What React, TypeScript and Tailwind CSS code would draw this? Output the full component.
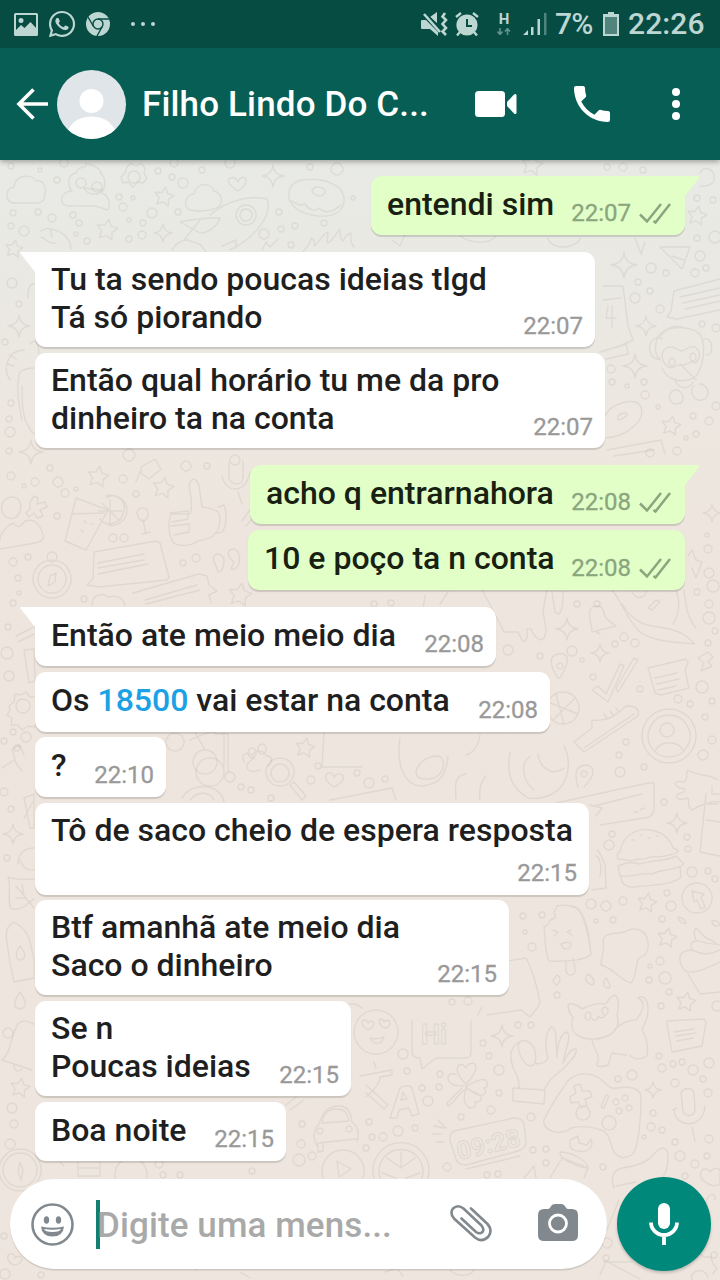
import {FaWhatsapp} from 'react-icons/fa';

type Message = {
    out?: boolean,
    tail?: boolean,
    text: string[],
    time: string,
    box: string,
}

// box holds the bubble size and the gap above it
const messages: Message[] = [
    {out: true, tail: true, text: ['entendi sim'], time: '22:07', box: 'w-[314px] h-[59px] mt-[16px]'},
    {tail: true, text: ['Tu ta sendo poucas ideias tlgd', 'Tá só piorando'], time: '22:07', box: 'w-[560px] h-[95px] mt-[17px]'},
    {text: ['Então qual horário tu me da pro', 'dinheiro ta na conta'], time: '22:07', box: 'w-[570px] h-[95px] mt-[6px]'},
    {out: true, tail: true, text: ['acho q entrarnahora'], time: '22:08', box: 'w-[435px] h-[59px] mt-[17px]'},
    {out: true, text: ['10 e poço ta n conta'], time: '22:08', box: 'w-[437px] h-[60px] mt-[6px]'},
    {tail: true, text: ['Então ate meio meio dia'], time: '22:08', box: 'w-[461px] h-[59px] mt-[17px]'},
    {text: ['Os 18500 vai estar na conta'], time: '22:08', box: 'w-[515px] h-[60px] mt-[6px]'},
    {text: ['?'], time: '22:10', box: 'w-[131px] h-[60px] mt-[5px]'},
    {text: ['Tô de saco cheio de espera resposta'], time: '22:15', box: 'w-[554px] h-[92px] mt-[6px]'},
    {text: ['Btf amanhã ate meio dia', 'Saco o dinheiro'], time: '22:15', box: 'w-[474px] h-[95px] mt-[5px]'},
    {text: ['Se n', 'Poucas ideias'], time: '22:15', box: 'w-[316px] h-[95px] mt-[6px]'},
    {text: ['Boa noite'], time: '22:15', box: 'w-[251px] h-[59px] mt-[6px]'},
];

// wallpaper: x, y, radius
const dots = [
    [11, 166, 3], [40, 170, 2], [64, 163, 4], [158, 171, 3], [174, 163, 4], [172, 177, 3], [183, 183, 5], [202, 170, 3], [230, 163, 5],
    [57, 180, 3], [119, 197, 3], [123, 207, 4], [133, 198, 2], [152, 213, 5], [178, 212, 3], [129, 220, 2], [143, 223, 3], [52, 218, 4],
    [73, 215, 3], [79, 223, 3], [76, 234, 2], [87, 241, 3], [11, 226, 3], [24, 231, 5], [38, 212, 3], [13, 213, 3], [129, 239, 3], [142, 235, 4],
    [264, 234, 5], [281, 229, 3], [279, 212, 3], [295, 226, 3], [291, 245, 3], [324, 223, 3], [310, 167, 3], [337, 169, 6], [353, 198, 2],
    [12, 283, 5], [19, 304, 3], [5, 342, 3], [11, 403, 3], [9, 419, 3], [10, 432, 5], [9, 451, 3], [129, 455, 6],
    [607, 167, 3], [623, 167, 4], [643, 170, 3], [697, 198, 3], [713, 200, 3], [697, 238, 3], [715, 237, 6], [700, 256, 5], [651, 268, 5],
    [666, 273, 3], [695, 273, 4], [706, 268, 3], [638, 282, 3], [650, 291, 3], [635, 298, 5], [660, 309, 4], [702, 324, 3], [716, 328, 4],
    [611, 369, 4], [612, 382, 3], [627, 386, 2], [644, 382, 3], [645, 395, 4], [716, 406, 4], [658, 407, 2], [693, 416, 3], [709, 421, 4],
    [686, 438, 2], [677, 451, 4], [696, 434, 3], [650, 453, 4], [235, 460, 5], [11, 476, 4], [35, 482, 4], [24, 486, 2], [50, 468, 3], [58, 482, 5],
    [65, 493, 4], [76, 489, 2], [123, 479, 4], [136, 494, 3], [57, 516, 3], [186, 466, 5], [207, 466, 3], [113, 538, 4], [124, 538, 4],
    [13, 562, 4], [28, 557, 3], [18, 578, 3], [19, 593, 2], [13, 603, 3], [84, 599, 3], [183, 563, 3], [196, 558, 4], [8, 627, 3],
    [7, 653, 6], [9, 676, 5], [13, 732, 3], [26, 737, 5], [4, 741, 3], [17, 748, 3], [708, 549, 4], [707, 535, 2], [709, 573, 5],
    [713, 586, 6], [709, 604, 4], [709, 618, 6], [697, 592, 3], [577, 604, 3], [597, 604, 3], [624, 637, 4], [635, 643, 4], [615, 644, 3],
    [572, 651, 5], [582, 660, 2], [540, 656, 3], [508, 650, 5], [593, 677, 3], [640, 689, 3], [708, 643, 3], [715, 631, 3], [702, 687, 6],
    [712, 701, 3], [690, 704, 3], [678, 699, 4], [626, 742, 3], [712, 740, 4], [619, 755, 3], [703, 755, 5], [705, 717, 3], [374, 604, 3], [391, 603, 3],
    [4, 792, 4], [11, 809, 3], [7, 858, 3], [230, 777, 5], [241, 787, 3], [251, 790, 3], [311, 780, 4], [318, 766, 3], [271, 798, 3],
    [357, 773, 3], [369, 783, 5], [385, 779, 3], [620, 772, 5], [644, 767, 3], [664, 802, 3], [612, 834, 3], [609, 845, 5], [687, 837, 3],
    [688, 849, 3], [692, 872, 5], [708, 871, 3], [715, 879, 3], [591, 904, 5], [606, 906, 5], [623, 901, 4], [613, 920, 3], [596, 921, 2],
    [667, 893, 3], [671, 906, 5], [662, 919, 3], [542, 915, 3], [523, 916, 3], [525, 932, 2], [532, 947, 4], [557, 995, 3], [660, 961, 4],
    [650, 966, 2], [649, 980, 3], [665, 978, 6], [669, 992, 3], [661, 1006, 3], [717, 1006, 5], [468, 1001, 4], [452, 1002, 3],
    [8, 1033, 5], [12, 1108, 5], [14, 1124, 4], [302, 1124, 3], [301, 1144, 4], [299, 1160, 6], [312, 1156, 4], [159, 1164, 4], [163, 1175, 3],
    [180, 1175, 3], [252, 1171, 3], [4, 1236, 3], [5, 1274, 5], [41, 1275, 3], [403, 1054, 5], [407, 1071, 3], [422, 1088, 3], [428, 1101, 5],
    [440, 1074, 3], [439, 1087, 3], [483, 1043, 3], [489, 1056, 3], [499, 1070, 5], [499, 1093, 3], [518, 1025, 3], [531, 1025, 3],
    [491, 1110, 4], [461, 1117, 3], [531, 1117, 4], [398, 1131, 5], [415, 1128, 3], [383, 1137, 4], [372, 1137, 3], [369, 1122, 3],
    [366, 1148, 3], [447, 1167, 4], [487, 1175, 3], [498, 1174, 3], [533, 1150, 3], [546, 1149, 3], [546, 1163, 3], [603, 1167, 3],
    [618, 1079, 3], [632, 1075, 5], [659, 1056, 3], [662, 1068, 4], [673, 1064, 3], [682, 1062, 3], [693, 1070, 5], [709, 1063, 5],
    [703, 1079, 3], [675, 1083, 4], [708, 1093, 4], [653, 1113, 3], [651, 1127, 4], [644, 1137, 2], [662, 1130, 3], [675, 1142, 3],
    [709, 1139, 4], [680, 1156, 5], [695, 1164, 4], [707, 1156, 3], [685, 1176, 3], [607, 1243, 5], [714, 1255, 3], [606, 1258, 3],
];

const sparkles = [
    [273, 176, 11], [163, 233, 9], [19, 326, 11], [31, 452, 12], [624, 265, 13], [646, 326, 10], [635, 366, 12], [567, 629, 11],
    [600, 653, 9], [712, 513, 9], [13, 834, 10], [677, 823, 10], [502, 1036, 11], [653, 1090, 8],
];

const stars = [
    [164, 197, 10], [107, 230, 11], [14, 249, 9], [98, 477, 11], [163, 488, 11], [697, 216, 10], [671, 426, 10], [240, 595, 12],
    [20, 1088, 10], [305, 748, 10], [647, 903, 10], [667, 938, 10], [686, 1002, 10], [532, 165, 11],
];

const doodles = [
    // clouds
    'M12 203c-8-4-6-15 2-16 1-12 17-14 22-6 8-2 12 10 8 14 2 6-4 8-8 8z',
    'M190 210c-8-4-4-16 4-16 2-12 18-12 20-3 8 2 10 12 4 16-6 4-20 5-28 3z',
    'M92 605c0-12 12-12 16-8 6-2 16 0 17 9',
    'M342 1010c4-10 16-6 20-2', 'M700 173c4-8 14-4 14 4 2 6-6 10-14 9',
    // poop
    'M76 173c2-8 12-4 10-10 6 2 14 4 16 12M76 173c-10 2-8 14-4 18-12 0-14 14-4 15 14 0 28-2 38 4 6 0 4-14-4-17 4-8 4-16-2-20M84 188c4 8 16 8 18 2z',
    // gears
    'M127 167l4-4 5 3 5-3 4 5-1 5 3 5-4 5-5-1-5 5-5-5-5 1-2-6 4-4z',
    'M9 706l5-4 1-8 6 1 5-3 4 5 7 0 0 6 5 3-3 6 3 6-6 3-1 6-7-1-6 4-4-5-7 0 1-7-5-3 3-5z',
    'M334 1258l8 4M683 1262l4-5 7 1 4-5 6 4 7 0 2 7 4 4-4 6M692 1280c-4-10 14-14 16-2',
    // hearts
    'M238 191c-10-6-12-11-7-13 4-2 6 2 7 4 2-5 6-6 8-3 1 5-5 10-8 12z',
    'M334 787c-8-5-10-10-7-13 4-3 6 0 7 3 3-4 7-4 9-1 2 4-4 9-9 11z',
    'M13 1265c-6-4-7-9-3-11 4-1 5 2 5 4 3-3 6-2 7 1 0 4-5 6-9 6z',
    'M701 1178c-3-12 8-10 9-6 4-6 12-4 10 2v10c-6 4-14 0-19-6z',
    // donuts
    'M289 192c2-12 16-14 32-12 18 4 24 12 23 22-2 14-18 16-32 13-16-3-25-12-23-23zM312 190c4-6 14-2 13 3-3 5-12 3-13-3zM291 201c6 2 8 6 14 3 4 6 10 8 14 4 6 6 14 4 22-3',
    'M604 418c4-12 20-18 32-16 8 4 8 16-2 24-8 8-20 12-29 12M618 416c4-4 12-4 8 0s-10 6-8 0',
    // rocket
    'M180 222c12-3 28-4 40-4-2 8-14 16-20 15zM210 215c18-16 44-20 57-16 6 14-10 38-37 51M246 205a10 10 0 1 0 .1 0M246 209a6 6 0 1 0 .1 0M172 250c6-10 16-12 20-8 8 0 12 6 14 10M184 240l16-20M222 246l14-6v8',
    // fire
    'M303 252c4-6 8-8 8-14 4 2 4 6 3 8 6-4 8-12 14-14 0 6-2 8 0 11 6-4 8-10 12-14 0 6 0 10 3 12 2-4 3-6 8-8 0 4-2 8 3 14M262 250l4-8 4 5 8-8',
    // carrot
    'M41 231c6-2 4-4 10-2 8 1 20 8 20 20M41 237c6 2 8 8 14 6M50 229l2 8',
    // calendar and mail
    'M603 286l20 0 5 40 5 14-18 8M603 300l18-2M608 306l-2 12 10 0M612 306v22M600 352l26-8 2 10-22 5',
    'M660 247l30 0-8 22zM672 256l12 4',
    'M392 240l8 6 6-14M460 236c8 6 28 10 36 0M548 238c4 14 30 10 32 0M635 238l6 16 4-12',
    // speech bubbles
    'M720 279l-46 12-3 20-4 6 10 2 43-9M680 297l40-9M683 303l37-8M685 309l35-8',
    'M94 552l62-11 4 2 9 34-2 3-68 7-12-2 6-6zM98 563l46-9M98 568l46-8M98 574l50-10',
    'M133 593l66-19 8 2 2 9 8 6-8 4 2 8M145 600l52-15M146 604l54-14',
    'M648 668l38-9 2 4-3 7 4 18-28 7-6-2zM655 678l22-5M657 684l22-5M658 690l18-4',
    'M607 450l54-10 4 14M614 456l40-6', 'M24 650l10-1 1 32-6 2z',
    'M667 1021l37-2 2 3-4 24-30 6-5-28zM674 1032l20-3M676 1036l20-3M677 1041l16-3',
    'M412 1020v30c0 6 2 8 8 8l2 11 14-11h28c6 0 7-2 7-7v-30',
    'M478 1015l4-8M482 965l44-7c6 10 12 32 14 44l-2 5-8 10-9-7-34 5',
    // monkey
    'M660 337c6-10 16-12 22-10M660 360c-8-8-4-22 0-26 10-10 38-8 42 4 3 10 2 28-6 38-10 8-28 6-34-8M662 339c-8-4-14 4-12 12 2 8 8 9 10 7M704 339c10-2 10 18 2 16M663 361c-4-14 8-16 14-12 8 6 8-4 18-2 6 4 6 12 0 16-6-4-8 4-14 2-8 0-10 8-18-4M672 358a3 4 0 1 0 .1 0M693 353a3 4 0 1 0 .1 0M680 364l16 16M675 380c4 10 14 10 18 2M678 390c-10-2-12 14-2 14 8 0 10-8 2-14M700 384c8 0 12 14 2 16-8 2-14-10-8-14',
    // backpack
    'M24 350c-16 0-22 18-14 30M10 355l6 4M8 364l6 2M30 344c8-10 10 10 8 10M22 420c-4-18-6-36-2-48 6-4 10-4 14-4M22 386c0 20 0 36 12 48M34 284c-6 0-6 8-6 14',
    // user, drink
    'M12 497c8 0 10 8 8 14-4 12-16 8-18 0s2-13 10-14zM0 549l35-6c10-2 10-6 6-14-4-8-10-10-16-8-6 8-8 6-12 2C6 526 0 534 0 540',
    'M30 502l4-6 4 2-1 6 8-2 2 5-7 3 3 6-6 2-3-5-5 4-3-4 4-4z',
    'M76 498l32 12-22 40-21-9zM72 514l32-1M106 498c10-6 20 2 18 13-3 14-18 16-24 8M106 496a16 15 0 1 1 2 29M110 500v26M98 511l24 0M102 503l16 16M84 521l2 2M91 524l2 0M81 530l2 2',
    'M137 513c2-8 12-6 11 2-2 8-9 8-11-2zM143 520l3 14M142 534l8-2',
    // thumb
    'M190 514c4-10 0-20-1-28 2-10 8-8 10 0l3 21c10 2 18 2 18 12 0 18-12 20-22 22-8 6-24 6-26-1-4-8-4-22 0-26zM170 513l18-2v8l-16 3M171 526l18-2v8l-15 3M218 507l6-2c4 10 2 22-2 27l-8 2',
    // mic top
    'M229 462v16c2 8 14 8 14-1v-16M222 476c4 18 24 18 28-4M238 492l4 12M141 467l14-8 6 10-12 10-8-6zM140 472l-4 10',
    // compasses
    'M52 560a19 19 0 1 0 .1 0M52 565a14 14 0 1 0 .1 0M52 552a5 5 0 1 0 .1 0M48 586l2-10 6-3-1 9z',
    'M20 1153a17 17 0 1 0 .1 0M20 1149a21 21 0 1 0 .1 0M10 1139a5 5 0 1 0 .1 0M18 1172l2-10 3 8-2 10z',
    // quotes
    'M214 562c-4-8 8-12 10-2 0 8-2 12-6 12l-2-6zM229 557c-4-8 8-12 10-2 2 8-2 16-8 14l3-7z',
    // splash
    'M242 521l10-14M246 526l10-12M16 636l20-10M18 642l16-8',
    'M482 590l12 22 10 20 14 0 4 8c4 4 6-2 5-11h4c4 10 14 18 15 0l-3-18 4-22M552 592l3 20c6 6 8-4 8-20M425 595l-2 14M440 604l8-12',
    // bell
    'M590 610c4-6 12-6 14 2 0 8 8 10 12 14l-24 6c0-10-4-12-2-22zM596 632l4 2',
    // chili
    'M612 590c10 12 14 28 28 42 14 10 34 10 55 12-8-8-12-12-30-16-14-2-30-2-43-24M632 592c6 10 16 4 14-2M648 608l8-8 4 2-8 8zM676 590c4 10 4 24-3 34M684 590c2 14 2 26 12 38',
    // pin, ticks, bolt
    'M558 678c-8-12-10-22 0-24 12-2 12 8 2 24zM560 663a3 3 0 1 0 .1 0M592 690l6-4 8 8 14-30 4 2-16 36zM616 688l18-30 4 2-20 32zM698 658l10-6 5 5-5 5 4 4-11 5 3-8zM688 556l4-6 4 10 6 2-6 16-4-10',
    // ball and sneaker
    'M563 692a16 16 0 1 0 .1 0M548 702l30 12M556 694l8 30M575 698l-22 22',
    'M574 742l18-14 0-8c14 2 24-4 34-14 6 0 14 0 12 10L584 752zM584 748l50-34M604 714l3 4M610 711l3 4M616 708l3 4',
    'M669 709a27 27 0 1 0 .1 0M669 715a21 21 0 1 0 .1 0M667 723a7 7 0 1 0 .1 0M655 752c4-12 22-12 28-2',
    // bicycle, paw
    'M175 733a9 9 0 1 0 .1 0M205 750a12 12 0 1 0 .1 0M195 732l10 18M190 740c10-4 24-12 26-6l12 0v38M224 732v34M244 762c-4-8 4-12 8-6 4-8 12-6 14 0 8 0 6 8 2 10M252 748a4 5 0 1 0 .1 0M262 744a4 5 0 1 0 .1 0M324 733l-2 34h40',
    // magnifier, headphones
    'M210 758a14 14 0 1 0 .1 0M280 758a14 14 0 1 0 .1 0M280 764a9 9 0 1 0 .1 0M290 785l4-3 12 14-4 4zM182 798c8-16 38-16 42 4M190 800c8-10 20-8 24 0M260 770c-14 4-18-4-6-12',
    // planet
    'M400 738c-4 26 4 48 22 48 16-2 24-8 26-30M416 772c2-10 12-16 22-16 8 2 8 16-4 22-8 2-18 2-18-6zM456 800c0-10-4-24 10-26M480 800c-2-14 4-22 6-24M510 752c-4 24 2 36 18 46 16 2 32-4 38-20 4-12 2-24-2-32M530 756c-10 8-8 24 4 34M538 754c2 16 16 22 26 14M330 800l62-12 4 12M480 735c-2 12-8 18-14 20',
    'M24 755l-4-10-8 4 4 14 6 8M24 818l10-18M2 768l12-8M24 798l10-4 0 34-4 0zM18 864c0-12 8-16 16-16M20 860c4 10 8 10 15 10',
    'M578 787c-4-14-2-20 6-22 12 0 12 10 0 22M584 771a3 3 0 1 0 .1 0M556 803l92-20 6 0 0 28-4 6-50 8M594 806l48-12M634 812l4 0M640 810l4-2M590 805l12 3-6 8',
    // hand, burger
    'M718 780c-8-6-22-4-30-10-4 6 2 8-4 12-10-2-12 2-4 6 8 0 6 4-2 6-4 6 4 6 10 4 2 4-2 8 4 12 6-4 20-10 30-8M712 786v8h8M706 794l-6 58 20 4M708 804l10 0M706 820l14 2',
    'M620 852c2-16 16-24 30-22 14 2 20 10 23 18l5 2c0 4-12 6-20 7-10-2-12 4-20 2-8 4-12 0-20 0-2-4 0-6 2-7zM618 866c10-4 14-4 22-2 10-4 24-2 36-8l8 8c-10 8-22 4-32 10-12-2-20 4-32 2zM621 876c0 8 6 12 14 11 16-2 38-2 46-10l-1-10M632 840l2 0M640 835l2 0M648 838l2 0M656 836l2 0',
    // leaf and bottles
    'M8 877c10 4 20 2 27 2M8 877c4 10-2 28 4 32 10 2 16-6 22-10M16 886l18 22M22 884l2 12M16 898h10M10 925l4-3 6 4c10 8 10 16 14 34l0 18-20 4c-4-16-6-30-7-40-2-10 0-14 3-17zM20 946c-6 8-4 14 1 14 6-2 4-8-1-14zM20 992c-8 12-6 16 0 17 8-2 6-8 0-17z',
    'M597 850c4 2 4 8 8 14l1 24-14 2M596 856c4 0 6 14 4 20',
    // arrow badge
    'M697 883a15 15 0 1 0 .1 0M692 891l12 3-3 3 4 10-4 2-4-9-3 2z',
    // ice cream bar
    'M557 906c8-2 20 0 23 6 6 10 10 30 11 42-4 6-24 8-42 7-4-8-4-22-5-34 6-2 4-6 8-8 4 0 4-4 2-6zM553 930l5 2-4 4M571 930l-4 2 5 3M561 944c4-2 8-2 10-1 0 8-8 8-10 1M566 961l0 10c2 6 10 6 9-4l-2-8M572 906c12 2 18 28 18 44',
    // splat and cupcake
    'M603 940c2-8 14-6 22-8 8-6 20-2 22 6 4 14-2 18-8 20-4 6-2 20-8 25-10-2-16-14-30-18 0-8 4-14 2-25z',
    'M696 940c-4-8 0-12 0-12l6 6c4 6 14 6 14 10M692 949c-4-8 4-8 8-8 6 4 16 2 20 4M684 970c-10-16 0-20 8-20 8 4 16 6 28 0M684 970c8 6 22-2 36-8M688 974l12 20 20-2',
    'M557 975c-6 6-4 8 0 10 4-4 4-8 0-10zM588 974c-6 6 2 12 6 10 0-4-2-8-6-10zM606 978c-6 8 2 12 4 9 0-4-2-6-4-9zM678 917c4 0 8 4 8 6-4 1-8-2-8-6zM712 921c4-2 8 2 8 4-4 3-8 0-8-4z',
    // cat
    'M573 1018c-4-6-6-12-4-14 4-1 10 2 13 5 8-4 18-6 24-5 2-4 6-8 9-9 4 2 4 14 2 20 3 10-1 18-10 21-8 4-20 4-26 1-8-3-11-10-8-19zM588 1012a3 4 0 1 0 .1 0M605 1007a3 4 0 1 0 .1 0M592 1019c4 3 6 0 6-3 3 3 6 2 7-1M592 1040c2 12 8 12 6 22-4 4 2 6 10 3l4-12 14 2M614 1030c6-6 12-10 22-10 8-10 10-18 2-22 6-4 10 2 10 12 0 10-4 14-6 20 6 10 6 16 5 26-6 4-14 4-17-1',
    'M484 985c4-6 4-8 8-10',
    // emoji and bell on the left
    'M376 1010a22 22 0 1 0 .1 0M368 1030c-6-4-8-8-4-10 3 0 4 2 4 3 2-3 6-2 6 0 0 3-3 6-6 7zM384 1028c-6-4-6-8-3-9 2 0 3 2 3 3 2-3 6-2 6 1 0 3-3 5-6 5zM370 1038c6 2 10 0 14-1-2 8-10 8-14 1z',
    'M2 1060c10-8 8-24 16-36 6-6 10-2 16 0M2 1060l30 10M14 1065c0 6 4 8 8 4',
    // translate
    'M360 1076l32-6v5l-12 2c0 8-8 14-14 20M376 1068l-2-6M366 1085l22 20-4 4-18-16',
    'M390 1118l10-30c4-3 10-3 12 0l7 26-7 2-3-8-10 2-2 8zM401 1100l2-8 4 7z',
    // clover
    'M466 1084c-8-8-10-14-8-18 4-4 6 0 8 2 2-6 10-6 10-2 0 8-6 14-10 18zM464 1086c-8 0-16-2-16-8s8-4 8-4M466 1086c10-4 18-10 21-4 2 4-2 6-3 6 4 6 0 8-5 7-6-2-10-4-13-9M464 1090c-8 6-10 14-16 16l-1-3 15-15M466 1088c-2 8-4 16 4 20 6 0 6-4 5-6 4 0 8-2 6-6-4-4-10-4-15-8',
    // ok hand
    'M519 1089c2-14-10-20-8-36 2-8 10-14 16-12 8 4 10 14 8 22-4 6-10 2-14-6-3-7-4-12-1-15M535 1063c4 2 10 0 13-5-4-14-2-26 3-31 6 0 5 14 6 30M557 1057c0-12 4-24 10-25 5 4-2 18-4 31M563 1063c4-8 8-15 13-14 2 6-8 14-13 20-8 6-16 12-19 22M513 1088l32 2-1 14-31-3z',
    // gamepad
    'M545 1118c6-14 16-26 22-36 8-10 22-10 32-4 6 4 10 12 18 10 14-2 24 0 24 10 0 18-2 48-8 56-8 6-16 4-20-4-4-10-4-18-12-20-12-4-22-4-30-2-6 6-20 6-26-2-2-4-2-6 0-8zM574 1086l6-2 2 7 8 0 2 6-7 2 2 6-6 3-3-6-7 1-1-6 6-4zM583 1106a7 7 0 1 0 .1 0M609 1116a7 7 0 1 0 .1 0M601 1107l5-12 3 1-5 12zM616 1099a3 3 0 1 0 .1 0M625 1095a3 3 0 1 0 .1 0M619 1108a3 3 0 1 0 .1 0M629 1105a3 3 0 1 0 .1 0',
    // mic right
    'M681 1093c2-6 12-6 13 0l1 18c-2 6-10 6-12 0zM674 1110c2 20 30 18 31-4M673 1110l4-2M692 1127l3 14',
    // clock
    'M454 1131l60-13c6 0 9 2 10 6l2 18c0 6-4 8-8 9l-52 14c-6 0-9-2-10-6l-6-18c0-6 0-8 4-10zM466 1169l54-13M434 1126l10 2M433 1134h8M436 1142h8M438 1120l8 8',
    // orange slice
    'M374 1178a28 28 0 1 1 54 0M380 1178a22 22 0 1 1 42 0M401 1168v-16M401 1168l-14-10M401 1168l14-10M396 1178l-14-5M406 1178l14-5',
    // jar and sock
    'M550 1178l12-20 26 10-4 10M560 1152c10 0 28 8 28 16-10 0-30-10-28-16zM570 1140l8-4 1 7 8 2 4-6c4 10-6 14-12 12-8 0-10-4-9-11zM614 1188c-4-12 0-18 8-20 16-2 26-6 32-14 6-8 14-8 14 2 0 10-2 18-6 22M616 1186l20-4M524 1178l10-12 2 12',
    'M607 1230l12-30M715 1200c0-10-8-6-10 6M600 1275l6-14 34 18M604 1262l28 0',
    // car
    'M317 1146c-4-8-4-16 2-22 4-12 8-18 20-18 8 0 12 6 13 16 6 4 8 12 5 20M322 1123l27-2c-2-10-6-12-13-12-8 0-12 4-14 14zM318 1143l38-4M320 1128a3 3 0 1 0 .1 0M349 1126a3 3 0 1 0 .1 0M318 1144v8l5-1v-8',
    'M343 1150a21 21 0 1 0 .1 0M337 1161l14 8-12 8zM131 1158a16 16 0 1 0 .1 0M78 1162v14h22v-14M78 1168h20M60 1162l4 4M286 1105l10-8M290 1110l14-10M196 1270c8-10 20-6 26-2M240 1272l10 6M450 1270c8 8 20 6 24 0M385 1272l12-4 6 8',
];

const starPath = ([x, y, r]: number[]) => {
    const points = [];
    for (let i = 0; i < 10; i++) {
        const radius = i % 2 ? r * 0.5 : r;
        const angle = Math.PI * i / 5 - 1.4;
        points.push(`${(x + radius * Math.cos(angle)).toFixed(1)},${(y + radius * Math.sin(angle)).toFixed(1)}`);
    }
    return `M${points.join('L')}Z`;
}

const sparklePath = ([x, y, r]: number[]) =>
    `M${x} ${y - r}Q${x + 1} ${y - 1} ${x + r} ${y}Q${x + 1} ${y + 1} ${x} ${y + r}Q${x - 1} ${y + 1} ${x - r} ${y}Q${x - 1} ${y - 1} ${x} ${y - r}Z`;

function Wallpaper() {
    return (
        <svg className="absolute inset-0 h-[1280px] w-[720px]" viewBox="0 0 720 1280" fill="none" stroke="#786e64" strokeOpacity="0.11" strokeWidth="1.4" strokeLinejoin="round" strokeLinecap="round">
            {dots.map(([x, y, r], index) => <circle key={index} cx={x} cy={y} r={r}/>)}
            {sparkles.map((item, index) => <path key={index} d={sparklePath(item)}/>)}
            {stars.map((item, index) => <path key={index} d={starPath(item)}/>)}
            {doodles.map((d, index) => <path key={index} d={d}/>)}
            <circle cx="134" cy="177" r="6"/>
            <circle cx="23" cy="706" r="7"/>
            <circle cx="81" cy="183" r="5"/>
            <circle cx="97" cy="187" r="5"/>
            <g className="font-['Roboto'] font-bold">
                <text x="421" y="1044" fontSize="27">Hi</text>
                <text x="459" y="1160" fontSize="25" transform="rotate(-13 459 1160)">09:28</text>
            </g>
        </svg>
    );
}

function StatusBar() {
    return (
        <div className="flex h-12 items-center bg-[#064c43] pr-4 pl-3.5 text-[#bdd6d2]">
            <svg className="h-[23px] w-6" viewBox="0 0 24 23">
                <path fill="currentColor" fillRule="evenodd" d="M1.5 0h21Q24 0 24 1.5v20q0 1.500-1.500 1.500h-21Q0 23 0 21.500v-20Q0 0 1.500 0zM2 2v15l5-5 3.500 3 6-6 5.500 6V2zM7 5a2.500 2.500 0 1 1 0 5a2.500 2.500 0 0 1 0-5z"/>
            </svg>
            <FaWhatsapp className="ml-[9px] size-[30px]"/>
            <svg className="ml-[9px] size-6" viewBox="0 0 24 24">
                <circle cx="12" cy="12" r="12" fill="currentColor"/>
                <g fill="none" stroke="#064c43" strokeWidth="1.400">
                    <circle cx="12" cy="12" r="5"/>
                    <path d="M12 7h11M7.500 14.500L2 5M16.300 14.500L11 24"/>
                </g>
            </svg>
            <div className="ml-[21px] flex gap-[6px]">
                <i className="size-1 rounded-full bg-current"/>
                <i className="size-1 rounded-full bg-current"/>
                <i className="size-1 rounded-full bg-current"/>
            </div>
            <svg className="ml-auto h-6 w-[27px]" viewBox="0 0 27 24">
                <path fill="currentColor" d="M0 9q0-1 1-1h4l12 12v4l-8-7H1q-1 0-1-1zM9 5l7-5v11z"/>
                <path d="M2 0l16 17" stroke="#064c43" strokeWidth="4"/>
                <path d="M3 2l16 18" stroke="currentColor" strokeWidth="2.600"/>
                <path d="M24 1l-2.500 3.500 3.500 3.500-3.500 4 3.500 4-3.500 3.500 3.500 3.500" stroke="currentColor" strokeWidth="2.600" fill="none"/>
            </svg>
            <svg className="ml-[7px] h-6 w-[24px]" viewBox="0 0 24 24">
                <circle cx="12" cy="13" r="10.600" fill="currentColor"/>
                <path d="M1 5l5-4M23 5l-5-4M5 20l-3 3.500M19 20l3 3.500" stroke="currentColor" strokeWidth="2.400"/>
                <path d="M12 7v7h5" fill="none" stroke="#064c43" strokeWidth="2"/>
            </svg>
            <div className="ml-[17px] flex w-[16px] flex-col items-center">
                <span className="text-[15px] leading-[13px] font-bold">H</span>
                <svg className="mt-[2px] h-[7px] w-[14px] opacity-50" viewBox="0 0 14 7">
                    <path d="M3 0v6M0.500 3.500L3 6.500l2.500-3M10.500 7V1M8 3.500L10.500 0.500l2.500 3" fill="none" stroke="currentColor" strokeWidth="1.600"/>
                </svg>
            </div>
            <svg className="ml-[11px] h-6 w-6" viewBox="0 0 24 24">
                <path d="M0 23l5-5v5zM8 15h2.500v8H8zM14.500 7h2.500v16h-2.500z" fill="currentColor"/>
                <path d="M21 1h2.500v22H21z" fill="currentColor" opacity=".4"/>
            </svg>
            <span className="ml-[8px] w-[40px] text-[30px] leading-none font-medium tracking-[-0.8px]">7%</span>
            <svg className="ml-[8px] h-6 w-4" viewBox="0 0 16 24">
                <path d="M5 0h6v2h5v22H0V2h5z" fill="currentColor"/>
                <path d="M2 5h12v17H2z" fill="#064c43" fillOpacity=".6"/>
            </svg>
            <span className="ml-[9px] w-[76px] text-[30px] leading-none font-medium tracking-[0.1px]">22:26</span>
        </div>
    );
}

function Header() {
    return (
        <div className="flex h-28 items-center bg-[#075e54] pl-4 text-white">
            <svg className="h-8 w-8" viewBox="0 0 32 32" fill="none" stroke="currentColor" strokeWidth="3.600">
                <path d="M32 16H3M17.500 1.500L3 16l14.500 14.500"/>
            </svg>
            <div className="ml-[9px] size-[69px] overflow-hidden rounded-full bg-[#dfe5e8]">
                <svg viewBox="0 0 69 69" fill="#fff">
                    <circle cx="34.500" cy="31" r="12"/>
                    <path d="M11 60c5-10 14-13.500 23.500-13.500S53 50 58 60L50 69H19z"/>
                </svg>
            </div>
            <h1 className="ml-4 w-[316px] text-[35px] leading-none font-medium tracking-[0.15px] whitespace-nowrap">Filho Lindo Do C...</h1>
            <svg className="ml-[17px] h-[26px] w-[42px]" viewBox="0 0 42 26" fill="currentColor">
                <rect width="30" height="26" rx="3.500"/>
                <path d="M32 11l7-7.500q2.500-1.500 2.500 1v17q0 2.500-2.500 1L32 15z"/>
            </svg>
            <svg className="ml-[51px] size-12" viewBox="0 0 24 24" fill="currentColor">
                <path d="M6.620 10.790c1.440 2.830 3.760 5.140 6.590 6.590l2.200-2.200c.27-.27.670-.36 1.020-.24 1.120.37 2.330.57 3.570.57.55 0 1 .45 1 1V20c0 .55-.45 1-1 1-9.390 0-17-7.610-17-17 0-.55.45-1 1-1h3.500c.55 0 1 .45 1 1 0 1.250.2 2.450.57 3.570.11.35.030.74-.25 1.020z"/>
            </svg>
            <div className="ml-[56px] flex flex-col gap-1">
                <i className="size-2 rounded-full bg-white"/>
                <i className="size-2 rounded-full bg-white"/>
                <i className="size-2 rounded-full bg-white"/>
            </div>
        </div>
    );
}

function Ticks() {
    return (
        <svg className="ml-[8px] h-[21px] w-[32px]" viewBox="0 0 32 21" fill="none" stroke="#8ba57f" strokeWidth="2.500">
            <path d="M1 11.500l7 7L22 1M14.500 18l2 1.500L31 1"/>
        </svg>
    );
}

function Bubble({message}: { message: Message }) {
    const {out, tail, text, time, box} = message;
    const single = text.length === 1;

    // numbers are shown as links
    const formatLine = (line: string) => line.split(/(\d{5})/g).map((part, index) =>
        /^\d{5}$/.test(part) ? <span key={index} className="text-[#1ba1e6]">{part}</span> : part
    );

    return (
        <div className={`relative shrink-0 rounded-[11px] px-4 shadow-[0_1.5px_1px_rgba(0,0,0,0.14)] ${single && !box.includes('h-[92px]') ? 'pt-[9px]' : 'pt-2'} ${out ? 'self-end bg-[#e1ffc7]' : 'bg-white'} ${tail ? (out ? 'rounded-tr-none' : 'rounded-tl-none') : ''} ${box}`}>
            {tail && !out && (
                <svg className="absolute top-0 -left-[15px] h-[24px] w-[16px]" viewBox="0 0 16 24" fill="#fff">
                    <path d="M16 0H1.500Q0 0 .5 1.500L15 20v4h1z"/>
                </svg>
            )}
            {tail && out && (
                <svg className="absolute top-0 -right-[15px] h-[24px] w-[16px]" viewBox="0 0 16 24" fill="#e1ffc7">
                    <path d="M0 0h14.500q1.500 0 1 1.500L1 20v4H0z"/>
                </svg>
            )}
            <div className={`text-[32px] leading-[38px] font-medium whitespace-nowrap ${out ? 'text-[#182012]' : 'text-[#1f1f1f]'}`}>
                {text.map((line, index) => <p key={index}>{formatLine(line)}</p>)}
            </div>
            <div className={`absolute flex items-center text-[24px] leading-[28px] [-webkit-text-stroke:0.3px_currentColor] ${single ? 'bottom-[8px]' : 'bottom-[7px]'} ${out ? 'right-[14px] text-[#8ba57f]' : 'right-[12px] text-[#999]'}`}>
                {time}
                {out && <Ticks/>}
            </div>
        </div>
    );
}

function Composer() {
    return (
        <div className="mt-4 flex items-center pl-[10px]">
            <div className="flex h-[90px] w-[597px] items-center rounded-full bg-white pl-[21px] shadow-[0_1.5px_1px_rgba(0,0,0,0.14)]">
                <svg className="size-[43px]" viewBox="0 0 43 43" fill="#82898e">
                    <circle cx="21.500" cy="21.500" r="20" fill="none" stroke="#82898e" strokeWidth="2.600"/>
                    <ellipse cx="15.500" cy="17" rx="2.700" ry="3.700"/>
                    <ellipse cx="27.500" cy="17" rx="2.700" ry="3.700"/>
                    <path fillRule="evenodd" d="M10 23.500q11.500 2.500 23 0Q32 33.500 21.500 33.500T10 23.500zM13 26q1 3 8.500 3t8.500-3q-8.500 1.500-17 0z"/>
                </svg>
                <div className="ml-[22px] h-[49px] w-1 bg-[#128070]"/>
                <span className="-ml-[3px] w-[343px] pt-[2px] text-[35px] leading-none font-medium tracking-[0.1px] text-[#a9a9a9]">Digite uma mens...</span>
                <svg className="ml-[9px] h-[40px] w-[44px]" viewBox="0 0 44 40" fill="none" stroke="#82898e" strokeWidth="2.600" strokeLinecap="round">
                    <path d="M22 4.500L38.500 20q5.500 6 1 12.500-6.500 6.500-13.500 1L5 14.500Q.5 9 4 4.500q5-4.500 10.500 0l18 17q3 3.500 1 6.500-3 2.500-6.500 0L12.500 14.500"/>
                </svg>
                <svg className="mb-[3px] ml-[45px] h-[37px] w-[40px]" viewBox="0 0 40 37">
                    <path fill="#82898e" d="M6 5h4q1.500 0 2.500-2Q14 0 17 0h6q3 0 4.500 3Q28.500 5 30 5h4q6 0 6 6v20q0 6-6 6H6q-6 0-6-6V11q0-6 6-6z"/>
                    <circle cx="20" cy="19.500" r="8.500" fill="#82898e" stroke="#fff" strokeWidth="2.800"/>
                </svg>
            </div>
            <div className="ml-[10px] flex size-[94px] items-center justify-center rounded-full bg-[#00897b] shadow-[0_2px_3px_rgba(0,0,0,0.2)]">
                <svg className="h-[42px] w-[30px]" viewBox="0 0 30 42">
                    <rect x="9" width="12" height="26" rx="6" fill="#fff"/>
                    <path d="M2 19.500a13 12.500 0 0 0 26 0M15 32v10" fill="none" stroke="#fff" strokeWidth="3.800"/>
                </svg>
            </div>
        </div>
    );
}

export default function App() {
    return (
        <div className="relative h-[1280px] w-[720px] overflow-hidden bg-linear-to-b from-[#e8eae6] from-12% to-[#eee6de] to-40% font-['Roboto',sans-serif]">
            <Wallpaper/>
            <div className="relative flex h-full flex-col">
                <div className="shadow-[0_2px_5px_rgba(0,0,0,0.3)]">
                    <StatusBar/>
                    <Header/>
                </div>
                <div className="flex flex-col items-start pr-[35px] pl-[35px]">
                    {messages.map((message, index) => <Bubble key={index} message={message}/>)}
                </div>
                <Composer/>
            </div>
        </div>
    );
}
